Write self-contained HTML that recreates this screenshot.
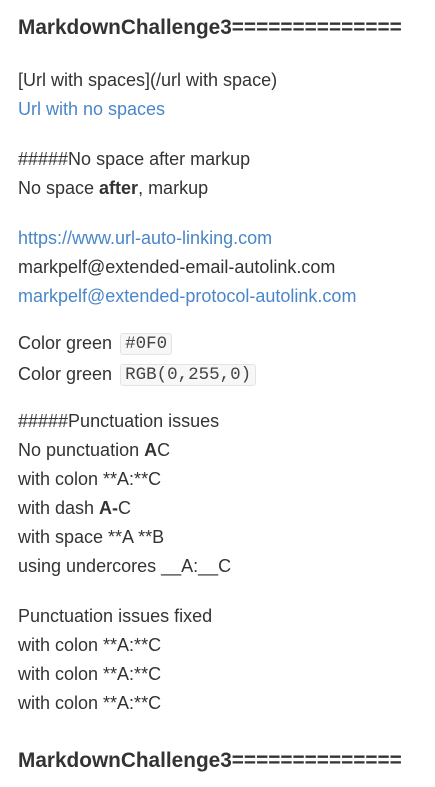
<!DOCTYPE html>
<html><head><meta charset="utf-8"><style>
html,body{margin:0;padding:0;background:#fff}
body{width:435px;height:774px;overflow:hidden;padding:0 18px;box-sizing:border-box;font-family:"Liberation Sans",sans-serif;font-size:18px;color:#333}
h1{font-size:20.8px;font-weight:bold;line-height:30px;margin:13px 0 23px;color:#333;white-space:nowrap}
p{margin:0 0 21px;line-height:29px;white-space:nowrap}
a{color:#4a86c8;text-decoration:none}
code{font-family:"Liberation Mono",monospace;font-size:17.5px;line-height:20px;display:inline-block;vertical-align:middle;color:#444;background:#f7f7f7;border:1px solid #e4e4e4;border-radius:3px;padding:0 4px;margin-left:3px}
p.c{line-height:31px;margin-top:-4px;margin-bottom:17px}
h1.last{margin-top:28px}
</style></head><body>
<h1>MarkdownChallenge3==============</h1>
<p>[Url with spaces](/url with space)<br><a>Url with no spaces</a></p>
<p>#####No space after markup<br>No space <b>after</b>, markup</p>
<p><a>https://www.url-auto-linking.com</a><br>markpelf@extended-email-autolink.com<br><a>markpelf@extended-protocol-autolink.com</a></p>
<p class="c">Color green <code>#0F0</code><br>Color green <code>RGB(0,255,0)</code></p>
<p>#####Punctuation issues<br>No punctuation <b>A</b>C<br>with colon **A:**C<br>with dash <b>A-</b>C<br>with space **A **B<br>using undercores __A:__C</p>
<p>Punctuation issues fixed<br>with colon **A:**C<br>with colon **A:**C<br>with colon **A:**C</p>
<h1 class="last">MarkdownChallenge3==============</h1>
</body></html>
